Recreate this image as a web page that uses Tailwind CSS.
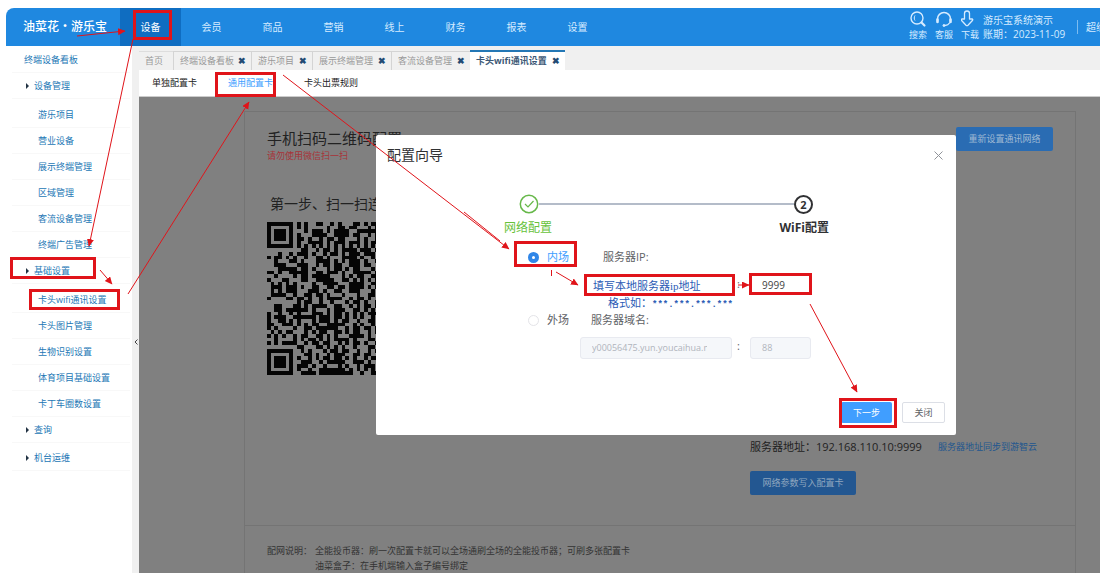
<!DOCTYPE html>
<html lang="zh-CN">
<head>
<meta charset="utf-8">
<title>游乐宝 - 卡头wifi通讯设置</title>
<script src="https://cdn.jsdelivr.net/npm/@tailwindcss/browser@4"></script>
</head>
<body class="relative flex h-screen flex-col overflow-hidden bg-white pl-[6px] pt-[8px] font-['Open_Sans','Noto_Sans_CJK_SC',sans-serif] text-[9px] leading-[14px] text-[#333]">

<header class="flex h-[38px] shrink-0 items-stretch overflow-hidden rounded-tl-lg bg-[#1f88e0] text-[10px] text-[#d5ebff]">
  <div class="flex w-[114px] shrink-0 items-center pl-[17px] text-[12px] font-medium whitespace-nowrap text-white">油菜花・游乐宝</div>
  <nav class="flex">
    <a href="#" class="flex w-[61px] items-center justify-center bg-[#0f6dc1] text-white">设备</a>
    <a href="#" class="flex w-[61px] items-center justify-center">会员</a>
    <a href="#" class="flex w-[61px] items-center justify-center">商品</a>
    <a href="#" class="flex w-[61px] items-center justify-center">营销</a>
    <a href="#" class="flex w-[61px] items-center justify-center">线上</a>
    <a href="#" class="flex w-[61px] items-center justify-center">财务</a>
    <a href="#" class="flex w-[61px] items-center justify-center">报表</a>
    <a href="#" class="flex w-[61px] items-center justify-center">设置</a>
  </nav>
  <div class="ml-auto flex w-[195px] shrink-0">
    <div class="flex w-[79px] pt-[2px] text-[9px]">
      <a href="#" class="flex w-[26px] flex-col items-center">
        <svg class="h-[18px] w-[18px]" viewBox="0 0 18 18" fill="none" stroke="currentColor"><circle cx="8" cy="8" r="6" stroke-width="1.4"/><path d="M6 5.500c-1 1.500-1 3.500 0 5" stroke-width="1"/><path d="M12.500 12.500l3 3" stroke-width="2.200" stroke-linecap="round"/></svg>
        <span>搜索</span></a>
      <a href="#" class="flex w-[26px] flex-col items-center">
        <svg class="h-[18px] w-[18px]" viewBox="0 0 18 18" fill="none" stroke="currentColor" stroke-linecap="round"><path d="M2.500 11V9a6.500 6.500 0 0 1 13 0v2" stroke-width="1.500"/><path d="M2.500 9.500v2.500M15.500 9.500v2.500" stroke-width="2.600"/><path d="M14.500 13c-1 1.700-2.500 2.300-4.500 2.500" stroke-width="1.300"/><circle cx="9" cy="15.500" r="1" fill="currentColor"/></svg>
        <span>客服</span></a>
      <a href="#" class="flex w-[26px] flex-col items-center">
        <svg class="h-[18px] w-[18px]" viewBox="3 0 18 18" fill="none" stroke="currentColor" stroke-width="1.300" stroke-linejoin="round"><path d="M6.500 3.500a2.500 2.500 0 0 1 5 0V9H14c.8 0 1 .9.400 1.500L10 15.200a1.400 1.400 0 0 1-2 0L3.600 10.500C3 9.900 3.200 9 4 9h2.500z"/></svg>
        <span>下载</span></a>
    </div>
    <div class="w-[94px] shrink-0 pt-[5px] whitespace-nowrap"><p>游乐宝系统演示</p><p>账期：2023-11-09</p></div>
    <div class="flex items-center whitespace-nowrap"><span class="h-[14px] border-l border-[#7dbcf0] pl-[8px] leading-[14px]">超级</span></div>
  </div>
</header>

<div class="flex min-h-0 flex-1">
  <aside class="relative flex w-[133px] shrink-0 border-r-[7px] border-[#f0f0f0] text-[#2377b5]">
    <nav class="mr-[2px] ml-[6px] flex-1 pt-px [&>a]:flex [&>a]:h-[26px] [&>a]:items-center [&>a]:border-b [&>a]:border-[#f8f8f8] [&>a]:whitespace-nowrap">
      <a href="#" class="pl-[12px]">终端设备看板</a>
      <a href="#" class="mb-[3px] gap-[5px] pl-[14px]"><i class="h-0 w-0 border-y-[3px] border-l-[3px] border-y-transparent border-l-[#234]"></i>设备管理</a>
      <a href="#" class="pl-[26px]">游乐项目</a>
      <a href="#" class="pl-[26px]">营业设备</a>
      <a href="#" class="pl-[26px]">展示终端管理</a>
      <a href="#" class="pl-[26px]">区域管理</a>
      <a href="#" class="pl-[26px]">客流设备管理</a>
      <a href="#" class="pl-[26px]">终端广告管理</a>
      <a href="#" class="mb-[3px] gap-[5px] pl-[14px]"><i class="h-0 w-0 border-y-[3px] border-l-[3px] border-y-transparent border-l-[#234]"></i>基础设置</a>
      <a href="#" class="pl-[26px]">卡头wifi通讯设置</a>
      <a href="#" class="pl-[26px]">卡头图片管理</a>
      <a href="#" class="pl-[26px]">生物识别设置</a>
      <a href="#" class="pl-[26px]">体育项目基础设置</a>
      <a href="#" class="pl-[26px]">卡丁车圈数设置</a>
      <a href="#" class="mb-[2px] gap-[5px] pl-[14px]"><i class="h-0 w-0 border-y-[3px] border-l-[3px] border-y-transparent border-l-[#234]"></i>查询</a>
      <a href="#" class="gap-[5px] pl-[14px]"><i class="h-0 w-0 border-y-[3px] border-l-[3px] border-y-transparent border-l-[#234]"></i>机台运维</a>
    </nav>
    <button aria-label="收起菜单" class="absolute top-[289px] -right-[7px] flex h-[14px] w-[7px] items-center justify-center text-[#444]"><svg class="h-[6px] w-[4px]" viewBox="0 0 4 6" fill="none" stroke="currentColor"><path d="M3.500.5L1 3l2.500 2.500"/></svg></button>
  </aside>

  <main class="flex min-w-0 flex-1 flex-col">
    <div class="flex h-[24px] shrink-0 items-end bg-[#f0f0f0] text-[#999] [&>a]:flex [&>a]:items-center [&>a]:whitespace-nowrap">
      <a href="#" class="h-[19px] w-[34px] border-t border-[#ddd] pl-[6px]">首页</a>
      <a href="#" class="h-[19px] w-[78px] justify-between border-t border-l border-[#d4d4d4] pr-[5px] pl-[6px]">终端设备看板<b class="text-[#234b73]">✖</b></a>
      <a href="#" class="h-[19px] w-[61px] justify-between border-t border-l border-[#d4d4d4] pr-[5px] pl-[6px]">游乐项目<b class="text-[#234b73]">✖</b></a>
      <a href="#" class="h-[19px] w-[79px] justify-between border-t border-l border-[#d4d4d4] pr-[5px] pl-[6px]">展示终端管理<b class="text-[#234b73]">✖</b></a>
      <a href="#" class="h-[19px] w-[79px] justify-between border-t border-l border-[#d4d4d4] pr-[5px] pl-[6px]">客流设备管理<b class="text-[#234b73]">✖</b></a>
      <a href="#" class="h-[20px] w-[95px] justify-between border-t-2 border-[#2377b5] bg-white pr-[5px] pl-[6px] font-bold text-[#3b5775]">卡头wifi通讯设置<b class="text-[#234b73]">✖</b></a>
    </div>
    <div class="flex h-[27px] shrink-0 items-center gap-[31px] border-b border-[#ccc] pl-[13px] text-[#222]">
      <a href="#">单独配置卡</a><a href="#" class="text-[#409eff]">通用配置卡</a><a href="#">卡头出票规则</a>
    </div>

    <div class="relative min-h-0 flex-1 overflow-hidden bg-[#808080]">
      <section class="mt-[14px] mr-[24px] ml-[105px] flex h-full flex-col border border-[#747474]">
        <div class="flex h-[414px] shrink-0 justify-between border-b border-[#747474] pt-[15px] pr-[22px] pl-[22px]">
          <div>
            <h1 class="h-[22px] text-[15px] leading-[22px] text-[#222]">手机扫码二维码配置</h1>
            <p class="text-[#a83238]">请勿使用微信扫一扫</p>
            <h2 class="mt-[29px] pl-[3px] text-[14px] leading-[24px] text-[#222]">第一步、扫一扫连接</h2>
            <svg id="qr" class="mt-[6px] h-[153px] w-[153px]" viewBox="0 0 41 41" shape-rendering="crispEdges" role="img" aria-label="二维码"><path fill="#050505"/></svg>
          </div>
          <div class="flex w-[303px] flex-col items-start">
            <button class="h-[24px] w-[97px] self-end rounded-[2px] bg-[#2a6cb3] text-[#9fb9d4]">重新设置通讯网络</button>
            <p class="mt-[288px] flex items-center gap-[16px] text-[11px] leading-[16px] whitespace-nowrap text-[#222]"><span>服务器地址：192.168.110.10:9999</span><a href="#" class="text-[9px] text-[#20568f]">服务器地址同步到游智云</a></p>
            <button class="mt-[16px] h-[24px] w-[106px] rounded-[2px] bg-[#235791] text-[#8fa6bf]">网络参数写入配置卡</button>
          </div>
        </div>
        <div class="flex gap-[3px] pt-[17px] pl-[22px] leading-[15px] text-[#333]">
          <span>配网说明：</span>
          <div><p>全能投币器：刷一次配置卡就可以全场通刷全场的全能投币器；可刷多张配置卡</p><p>油菜盒子：在手机端输入盒子编号绑定</p></div>
        </div>
      </section>

      <div role="dialog" aria-label="配置向导" class="absolute top-[38px] left-[237px] flex h-[300px] w-[580px] flex-col rounded-[2px] bg-white text-[11px] text-[#606266]">
        <div class="flex items-center justify-between pt-[10px] pr-[13px] pl-[11px]">
          <h3 class="text-[14px] leading-[20px] text-[#303133]">配置向导</h3>
          <button aria-label="关闭对话框" class="text-[#909399]"><svg class="h-[9px] w-[9px]" viewBox="0 0 9 9" stroke="currentColor"><path d="M.5.5l8 8M8.500.5l-8 8"/></svg></button>
        </div>
        <div class="mt-[29px] flex items-center pr-[143px] pl-[143px]">
          <svg class="h-[20px] w-[20px] shrink-0" viewBox="0 0 20 20" fill="none" stroke="#67b84a"><circle cx="10" cy="10" r="8.700" stroke-width="1.500"/><path d="M6 10l3 3 5.500-6" stroke-width="1.200"/></svg>
          <span class="h-[2px] flex-1 bg-[#b4bcc9]"></span>
          <span class="flex h-[19px] w-[19px] items-center justify-center rounded-full border-2 border-[#303133] text-[11px] leading-none font-bold text-[#303133]">2</span>
        </div>
        <div class="mt-[5px] flex justify-between pr-[127px] pl-[128px] text-[12px] leading-[18px]"><span class="text-[#67c23a]">网络配置</span><b class="text-[#303133]">WiFi配置</b></div>

        <form class="mt-[11px] grid grid-cols-[75px_auto] pl-[152px] leading-[18px]">
          <label class="flex h-[18px] items-center gap-[8px] text-[#409eff]"><input type="radio" name="net" checked class="h-[11px] w-[11px] appearance-none rounded-full border-[#dcdfe6] bg-white checked:border-[4px] checked:border-[#2f86e8]">内场</label>
          <label for="ip" class="h-[18px]">服务器IP:</label>
          <div class="col-start-1 col-end-3 ml-[52px] flex h-[36px] pt-[9px]">
            <input id="ip" value="填写本地服务器ip地址" class="h-[20px] w-[151px] pl-[13px] font-['Liberation_Serif','Noto_Sans_CJK_SC',serif] text-[11px] text-[#2b5bb5]">
            <span class="w-[18px] pl-[6px]">:</span>
            <input aria-label="端口" value="9999" class="h-[20px] w-[62px] pl-[13px] text-[10px] text-[#444]">
          </div>
          <p class="col-start-1 col-end-3 -mt-[7px] mb-[-11px] h-[18px] pl-[80px] font-['Liberation_Mono','Noto_Sans_CJK_SC',monospace] text-[11px] text-[#2b5bb5]">格式如：<span class="text-[9px] font-bold">***.***.***.***</span></p>
          <label class="mt-[9px] flex h-[18px] items-center gap-[8px]"><input type="radio" name="net" class="h-[11px] w-[11px] appearance-none rounded-full border border-[#e4e4e8] bg-white">外场</label>
          <label for="domain" class="mt-[9px] -ml-[12px] h-[18px]">服务器域名:</label>
          <div class="col-start-1 col-end-3 mt-[8px] ml-[52px] flex h-[22px]">
            <input id="domain" disabled value="y00056475.yun.youcaihua.net" class="w-[152px] rounded-[3px] border border-[#e8eaf0] bg-[#f5f7fa] pr-[24px] pl-[11px] text-[9px] text-[#b0b4bc]">
            <span class="w-[18px] pl-[5px]">:</span>
            <input aria-label="域名端口" disabled value="88" class="w-[61px] rounded-[3px] border border-[#e8eaf0] bg-[#f5f7fa] pl-[11px] text-[9px] text-[#b0b4bc]">
          </div>
        </form>

        <div class="mt-auto flex justify-end gap-[10px] pr-[11px] pb-[12px] text-[9px]">
          <button class="h-[21px] w-[51px] rounded-[2px] bg-[#409eff] text-white">下一步</button>
          <button class="h-[21px] w-[43px] rounded-[2px] border border-[#dcdfe6]">关闭</button>
        </div>
      </div>
    </div>
  </main>
</div>

<!-- Step-by-step guide drawn over the page -->
<svg class="pointer-events-none absolute top-0 left-0 h-[573px] w-[1100px]" viewBox="0 0 1100 573" fill="none" stroke="#e0141a" aria-hidden="true">
  <defs><marker id="tip" markerUnits="userSpaceOnUse" markerWidth="9" markerHeight="8" refX="7" refY="3.500" orient="auto"><path d="M0 0l7.500 3.500L0 7z" fill="#e0141a" stroke="none"/></marker></defs>
  <g stroke-width="3">
    <path d="M134.500 11.500h36v27h-36zM216.500 73.500h58v22h-58zM11.500 258.500h83v19h-83zM30.500 290.500h88v18h-88zM515.500 242.500h60v23h-60zM585.500 275.500h148v19h-148zM750.500 274.500h60v19h-60zM840.500 399.500h55v27h-55z"/>
  </g>
  <g stroke-width="1">
    <path d="M77 36L125 31" marker-end="url(#tip)"/>
    <path d="M133 39L89 246" marker-end="url(#tip)"/>
    <path d="M100 270L112 284" marker-end="url(#tip)"/>
    <path d="M128 294L249 102" marker-end="url(#tip)"/>
    <path d="M283 75L509 249" marker-end="url(#tip)"/>
    <path d="M556 272L578 285" marker-end="url(#tip)"/>
    <path d="M738 285H749" marker-end="url(#tip)"/>
    <path d="M810 304L857 392" marker-end="url(#tip)"/>
  </g>
  <path d="M464 212L500 241M551.500 270v6"/>
</svg>

<script>
  const rows = [
    "#######.#.#..##..#.#...##.#.##.#.########",
    "#.....#.#.#.....#..##.##...#.#..#.#.....#",
    "#.###.#...#.###.#.####..#######.#.#.###.#",
    "#.###.#.#...####..####.##..#.##.#.#.###.#",
    "#.###.#.##.#..#.##.##...#.#..##.#.#.###.#",
    "#.....#.#..####.#.###.###.#.###.#.#.....#",
    "#######.#.#.#.#.#.#.#.#.#.#.#.#.#.#######",
    ".........##..#.##.#.####.###.##.#........",
    "...#..#.###.#..#.##.#.###.###..#.##.#.#.#",
    "#.##.#.#..#..##.#...####.#..#.#.#..#.##..",
    "..#...##.#...####.#.#.###.#..#.#.##.##..#",
    "..###...###..#.##.##..###.##...#.#..#.#.#",
    "...#####.##.#...#.##.#.##...#.#..##.##...",
    "##.#..#####..##.###.#..#####.##.#..#.#.##",
    "..#....#.##.#####...#.#.##..######.#.##..#.",
    "#...##...##..#####..##.#.#.#.#..#.##.#.##",
    ".#.#.#.#....#..####...####..###.#...#.##.",
    ".###.###.#..##..##.##.####.#.#..##.#..#.#",
    ".#.#.###...###.#..##..###...#.#..#.##.#..",
    ".####..#..##.##.#...#...#..##.#.##.#...#.",
    "#....##.##.#..#.####..#.##.#...#..#.##.#.",
    "........#.##..#..#...#.##.#..#.#.##..#.##",
    "..##...##.#.####..##..#.#.##.#..#.##..##.",
    "..##.######.#...#.###..##.#.#.##.#..#.#..",
    "#..#..#.#...###.#.##.#.#.#.###..#.##..#.#",
    "#.###..######.###.##.#.#.#..#.#..##.#.#..",
    "#..##.#.#...#.###.#.##..#..##.#.##..#..##",
    "##..###.#.#.##..#####..#.#..#.##.#.##..#.",
    "#.#....#..##.######..#.##.##.#..#..#.##.#",
    ".#.#.##...#.#.##..##.#.##..#.##.##.#..##.",
    "#.#.#..#.##..##.#.#...####.#..#.#.#.#####",
    "..#....#.#.##.#.#.####.#...##.#.##.#.#..#",
    "#.#.####..#.##.##..#.#.##.#..#.#########.",
    "........##...##.#.#.#..#...##..##...#..#.",
    "#######..#.#...#.##.##..#..#.#.##.#.##.##",
    "#.....#...##.#..#.###..##.##..###...#..#.",
    "#.###.#.#..#.#.##.##.#.#..#.###.######.##",
    "#.###.#..###..#.#####..###.#...#.##.##.#.",
    "#.###.#.###.#..#...#.#..#.###.##.#.#.#.##",
    "#.....#.#..#..#######.#.#.#.#..#.##.#..#.",
    "#######..####.#########..#..##.#.#..##.##"
  ];
  let d = "";
  rows.forEach((r, y) => [...r].forEach((c, x) => { if (c === "#") d += `M${x} ${y}h1v1h-1z`; }));
  document.querySelector("#qr path").setAttribute("d", d);
</script>
</body>
</html>
